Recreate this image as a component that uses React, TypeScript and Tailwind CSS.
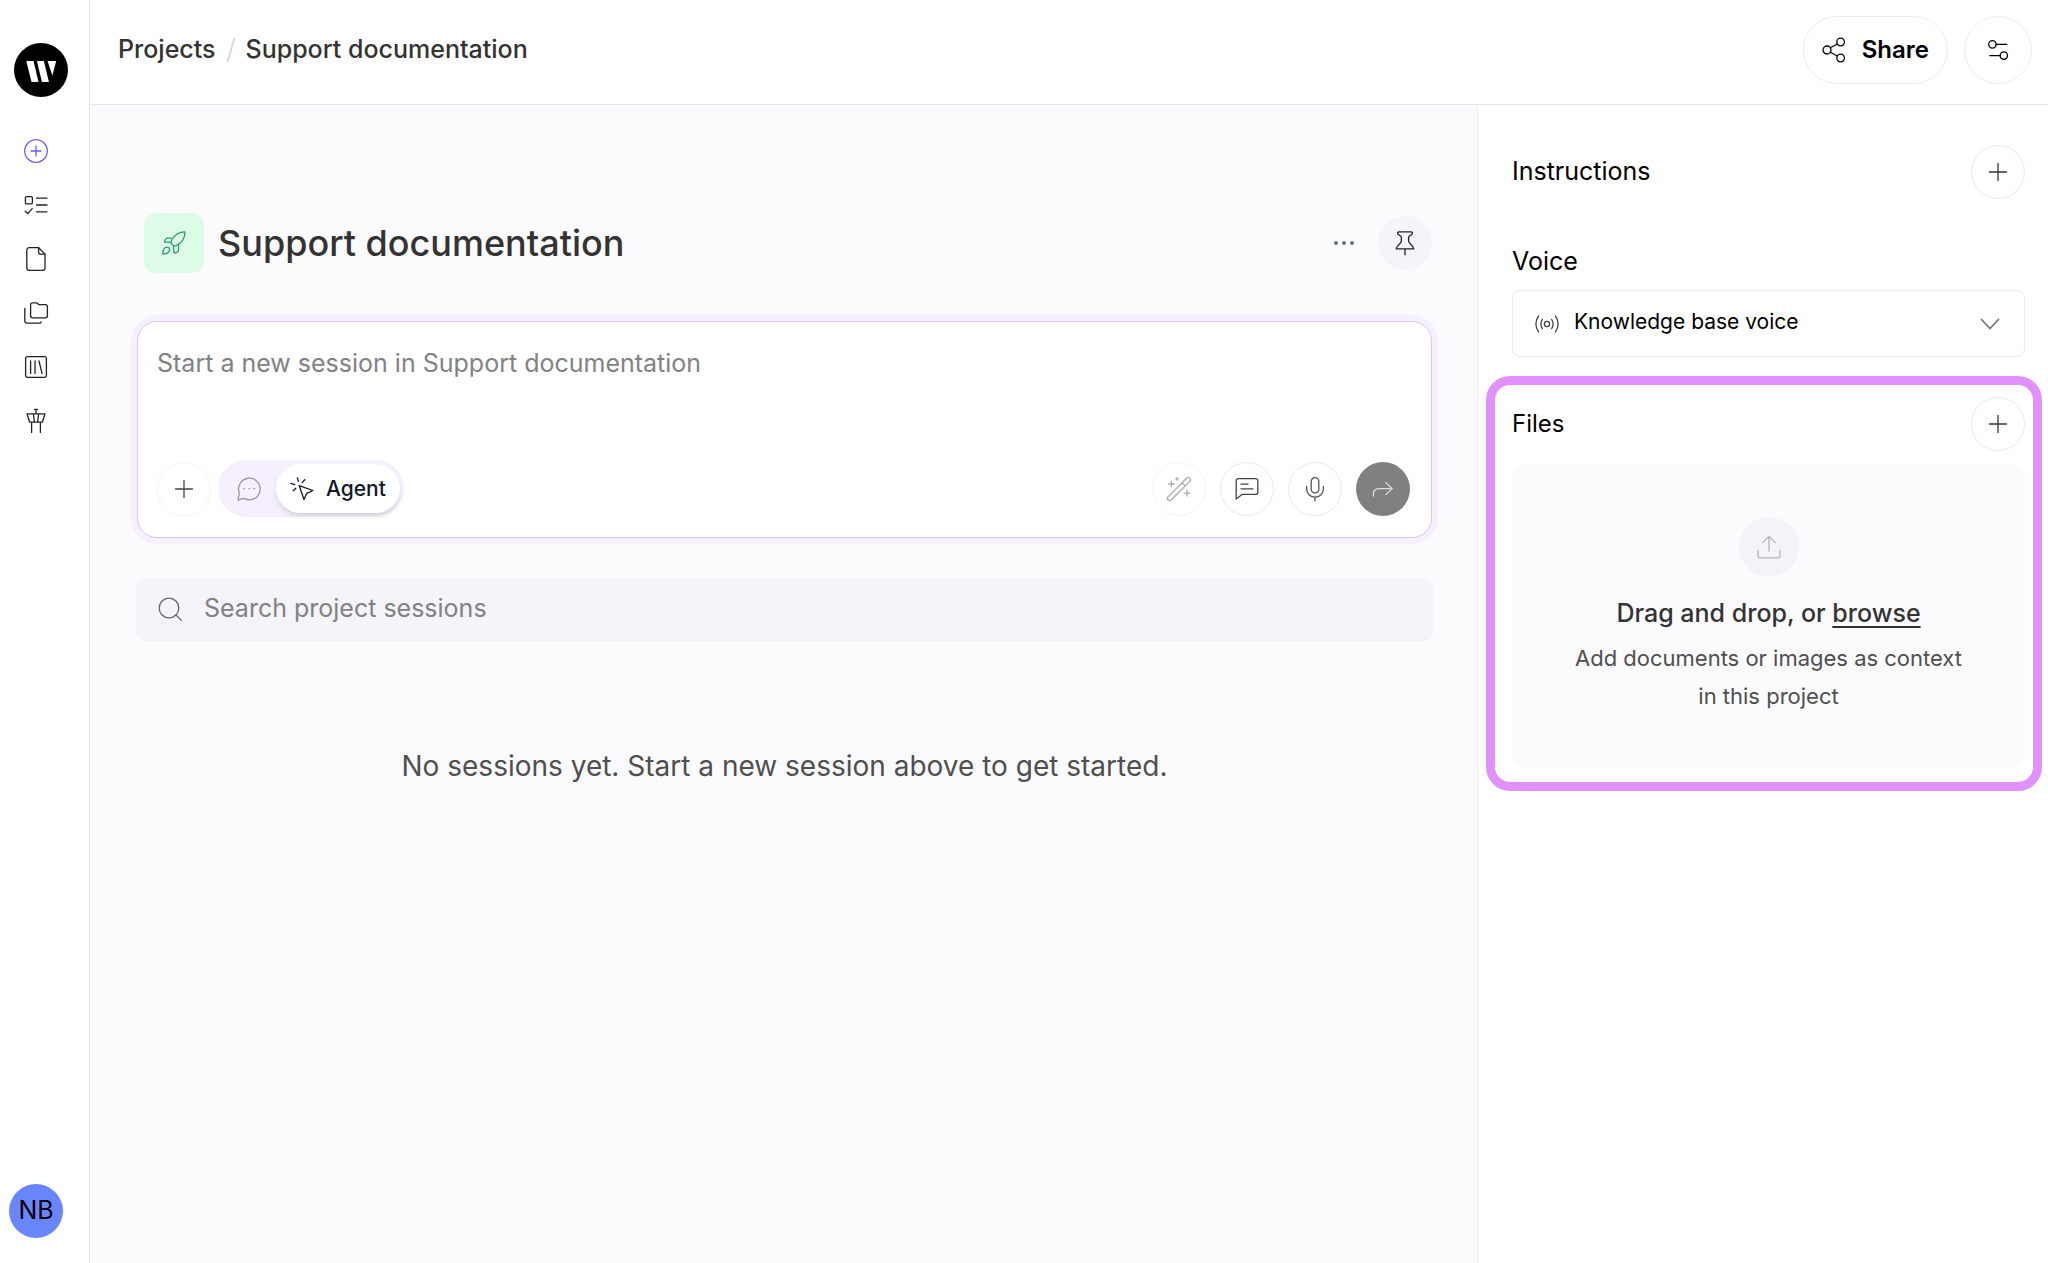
import React from "react";

const ICONS = {
  plusCircle: (
    <>
      <circle cx="12" cy="12" r="11.3" />
      <path d="M12 7v10M7 12h10" />
    </>
  ),
  tasks: (
    <>
      <rect x="1.4" y="3.6" width="7" height="7.2" rx="1.2" />
      <path d="M1.2 18.2l2.6 2.4 4.4-5M12.5 5.2H23M12.5 12H23M12.5 18.8H23" />
    </>
  ),
  file: (
    <>
      <path d="M5 .7h9.6l6.4 6.4v14a2.2 2.2 0 0 1-2.2 2.2H5a2.2 2.2 0 0 1-2.2-2.2V2.9A2.2 2.2 0 0 1 5 .7z" />
      <path d="M14.6.7v4.2a2.2 2.2 0 0 0 2.2 2.2H21" />
    </>
  ),
  folders: (
    <>
      <path d="M8.6 1.8h3.6c1.4 0 1.8 1.8 3.2 1.8h6a2 2 0 0 1 2 2v9.2a2 2 0 0 1-2 2H8.6a2 2 0 0 1-2-2v-11a2 2 0 0 1 2-2z" />
      <path d="M.8 7.5v12.3a2.4 2.4 0 0 0 2.4 2.4h12a2 2 0 0 0 2-1.2" />
    </>
  ),
  library: (
    <>
      <rect x="1.6" y="1.6" width="20.8" height="20.8" rx="1.8" />
      <path d="M6.6 6v12.4M11 6v12.4M15 6l3 12.4" />
    </>
  ),
  tower: (
    <path d="M3 4.8h18l-2.6 8.4H5.6L3 4.8zM12 4.8V.4M10.6.4h2.8M9.4 5l1 8M14.600 5l-1 8M7.600 13.200v10.200M16.400 13.200v10.200" />
  ),
  share: (
    <>
      <circle cx="5" cy="12" r="4" />
      <circle cx="18.6" cy="4" r="3.8" />
      <circle cx="18.6" cy="20" r="3.8" />
      <path d="M8.4 9.8l6.8-3.8M8.4 14.2l6.8 3.8" />
    </>
  ),
  settings: (
    <>
      <circle cx="6.4" cy="6.4" r="3.7" />
      <circle cx="17.8" cy="17.6" r="3.7" />
      <path d="M10.1 6.4h10.7M3.8 17.6h10.3" />
    </>
  ),
  rocket: (
    <>
      <path d="M9.2 10.2C12.4 3.4 17 .8 23 .9c.2 6-2.6 10.6-9.2 13.9l-2.2.1-2.4-2.5z" />
      <path d="M9.2 7.2H5.4C3.8 7.2 2.4 9.4 2.6 11.2h6.2M16.6 14.2v3.6c0 2.4-1.4 4.2-4.4 4.2-.8-2-.6-4.6-.6-7M.9 23.2c-.2-3 .6-7 4.2-7 2.6 0 3.2 3 1.6 4.8-1.5 1.6-3.7 2.1-5.8 2.200z" />
    </>
  ),
  pin: (
    <path d="M6 .9h12c1.6 0 1.8 1.4 1 2.3-1 1.2-3.4 1.4-3.4 3v3.6c0 3.2 4.8 4 5.2 8H3.2c.4-4 5.2-4.8 5.2-8V6.2c0-1.6-2.4-1.8-3.4-3C4.2 2.3 4.4.9 6 .9zM12 17.8v6" />
  ),
  plus: <path d="M12 3.5v17M3.5 12h17" />,
  chat: (
    <>
      <path d="M1 23l1.4-6.8A10.8 10.8 0 1 1 7 21.4L1 23z" />
      <path d="M7 11.7h.6M12 11.7h.6M17 11.7h.6" />
    </>
  ),
  cursor: (
    <path d="M9.2 8.6l13.6 4.9-6 2.8-2.8 6.2L9.2 8.6zM7.4.8l1 3.6M14.8 2.8l-2.6 2.8M1 6.4l3.8 1.2M3.2 13.8l2.6-2.6" />
  ),
  wand: (
    <path d="M1.2 19.6L19.6 1.2c2.4-2 5.2.8 3.2 3.2L4.4 22.8c-2.4 2-5.2-.8-3.2-3.2zM15 5.8L18.2 9M4.4 4.2v5.6M1.6 7h5.6M20 13.4V19M17.2 16.2h5.6M10 .4v2.8M8.6 1.8h2.8" />
  ),
  comment: (
    <>
      <path d="M3.2 1.6h17.6a2 2 0 0 1 2 2v11.8a2 2 0 0 1-2 2H7L1.2 22V3.6a2 2 0 0 1 2-2z" />
      <path d="M6 7.2h7M6 11.8h12" />
    </>
  ),
  mic: (
    <>
      <rect x="8.2" y=".7" width="7.6" height="15.2" rx="3.8" />
      <path d="M3.6 9.5v2.3a8.4 8.4 0 0 0 16.8 0V9.5M12 20.2v3.6" />
    </>
  ),
  send: <path d="M2.4 19v-2.4a5 5 0 0 1 5-5h13.8M14.8 5.6l6.4 6-6.4 6" />,
  search: (
    <>
      <circle cx="11" cy="11" r="9.8" />
      <path d="M18 18l5.4 5.4" />
    </>
  ),
  voice: (
    <>
      <circle cx="12" cy="12" r="2.6" />
      <path d="M7.4 7.4c-2 2.6-2 6.6 0 9.2M16.6 7.4c2 2.6 2 6.6 0 9.2M3.6 4c-3.6 4.6-3.6 11.4 0 16M20.4 4c3.6 4.6 3.6 11.4 0 16" />
    </>
  ),
  chevron: <path d="M3.5 7.500l8.500 9 8.500-9" strokeWidth="1.800" />,
  upload: <path d="M12 16V1.4M5.8 7.6L12 1.4l6.2 6.2M1 15.5v5.3a2 2 0 0 0 2 2h18a2 2 0 0 0 2-2v-5.3" />,
};

type IconName = keyof typeof ICONS;

function Icon({ name, className = "" }: { name: IconName; className?: string }) {
  return (
    <svg
      viewBox="0 0 24 24"
      fill="none"
      stroke="currentColor"
      strokeWidth="1.3"
      strokeLinecap="round"
      strokeLinejoin="round"
      overflow="visible"
      aria-hidden="true"
      className={`size-6 shrink-0 ${className}`}
    >
      {ICONS[name]}
    </svg>
  );
}

function RoundButton({ name, label, className = "" }: { name: IconName; label: string; className?: string }) {
  return (
    <button
      type="button"
      aria-label={label}
      className={`flex size-[54px] shrink-0 items-center justify-center rounded-full ${className}`}
    >
      <Icon name={name} />
    </button>
  );
}

const NAV: { name: IconName; label: string }[] = [
  { name: "plusCircle", label: "New session" },
  { name: "tasks", label: "Tasks" },
  { name: "file", label: "Documents" },
  { name: "folders", label: "Projects" },
  { name: "library", label: "Library" },
  { name: "tower", label: "Control tower" },
];

export default function App() {
  return (
    <div className="flex min-h-screen bg-white font-['Inter',sans-serif] text-[#333]">
      <Sidebar />
      <div className="flex min-w-0 flex-1 flex-col">
        <Header />
        <div className="flex flex-1">
          <main className="min-w-0 flex-1 bg-[#fbfbfe] pt-27 pr-11 pl-[46px]">
            <ProjectTitle />
            <Composer />
            <label className="mt-10 flex h-[62px] items-center gap-[22px] rounded-xl bg-[#f4f4f9] px-[22px] shadow-xs">
              <Icon name="search" className="text-[#666]" />
              <input
                type="search"
                aria-label="Search project sessions"
                placeholder="Search project sessions"
                className="min-w-0 flex-1 bg-transparent text-[25px] outline-none placeholder:text-[#828282]"
              />
            </label>
            <p className="mt-[106px] text-center text-[28px] leading-10 text-[#4f4f4f]">
              No sessions yet. Start a new session above to get started.
            </p>
          </main>
          <ContextPanel />
        </div>
      </div>
    </div>
  );
}

function Sidebar() {
  return (
    <aside className="flex w-[90px] shrink-0 flex-col border-r border-[#e4e4ed] pt-[43px] pb-[25px]">
      <a href="#home" aria-label="Home" className="ml-3.5">
        <svg viewBox="0 0 54 54" className="size-[54px]" aria-hidden="true">
          <circle cx="27" cy="27" r="27" fill="#000" />
          <path fill="#fff" d="M12.3 18h7.2l5 21h-7zM22.9 18h7l5 21h-7zM33.500 18h8.700L38.400 32.500z" />
        </svg>
      </a>
      <nav className="mt-[27px] flex flex-col">
        {NAV.map((item) => (
          <a
            key={item.label}
            href="#nav"
            aria-label={item.label}
            className={`ml-[9px] flex size-[54px] items-center justify-center ${
              item.name === "plusCircle" ? "text-[#6a5fff]" : "text-[#222]"
            }`}
          >
            <Icon name={item.name} />
          </a>
        ))}
      </nav>
      <button
        type="button"
        className="mt-auto ml-[9px] size-[54px] rounded-full bg-[#6985ff] text-[25px] text-black"
      >
        NB
      </button>
    </aside>
  );
}

function Header() {
  return (
    <header className="flex h-[105px] items-start justify-between border-b border-[#e4e4ed] pt-4 pr-4 pl-7">
      <nav className="flex h-[67px] items-center text-[25px] font-medium">
        <a href="#projects">Projects</a>
        <svg viewBox="0 0 10 26" className="mx-2.5 h-[26px] w-2.5" aria-hidden="true">
          <path d="M8.5 1L1.5 25" stroke="#d5d7dc" strokeWidth="2" />
        </svg>
        <a href="#project">Support documentation</a>
      </nav>
      <div className="flex gap-4 text-black">
        <button
          type="button"
          className="flex h-[68px] items-center gap-4 rounded-full border border-[#ececf2] px-[18px] text-2xl font-semibold"
        >
          <Icon name="share" />
          Share
        </button>
        <button
          type="button"
          aria-label="Settings"
          className="flex size-[68px] items-center justify-center rounded-full border border-[#ececf2]"
        >
          <Icon name="settings" />
        </button>
      </div>
    </header>
  );
}

function ProjectTitle() {
  return (
    <div className="flex items-center pr-px pl-2">
      <div className="flex size-15 items-center justify-center rounded-xl bg-[#dcfce7] text-[#2a9d6f]">
        <Icon name="rocket" />
      </div>
      <h1 className="ml-3.5 text-4xl font-medium">Support documentation</h1>
      <button type="button" aria-label="More" className="mr-6 ml-auto text-[#64748b]">
        <svg viewBox="0 0 20 20" className="size-5" fill="currentColor" aria-hidden="true">
          <circle cx="2" cy="10" r="2" />
          <circle cx="10" cy="10" r="2" />
          <circle cx="18" cy="10" r="2" />
        </svg>
      </button>
      <RoundButton name="pin" label="Pin project" className="bg-[#f4f4f9] text-[#222]" />
    </div>
  );
}

function Composer() {
  return (
    <form className="mx-px mt-12 rounded-[20px] border border-[#dcc4f8] bg-white pt-[23px] pr-[21px] pb-5 pl-[19px] ring-6 ring-[#f5effe]">
      <textarea
        aria-label="Message"
        placeholder="Start a new session in Support documentation"
        className="block h-[115px] w-full resize-none text-[25px] leading-9 outline-none placeholder:text-[#828282]"
      />
      <div className="flex items-center">
        <RoundButton name="plus" label="Add" className="border border-[#f4f4f9] text-[#444]" />
        <div className="ml-[7px] flex h-[57px] items-center rounded-full bg-[#f5effe] p-1">
          <button type="button" aria-label="Chat" className="px-[15px] text-[#999]">
            <Icon name="chat" />
          </button>
          <button
            type="button"
            className="flex h-[49px] items-center gap-3 rounded-full bg-white px-3.5 text-[21px] font-medium text-[#0f172a] shadow-md"
          >
            <Icon name="cursor" />
            Agent
          </button>
        </div>
        <div className="ml-auto flex gap-3.5">
          <RoundButton name="wand" label="Enhance prompt" className="border border-[#f4f4f9] text-[#aaa]" />
          <RoundButton name="comment" label="Prompts" className="border border-[#e9e7f3] text-[#444]" />
          <RoundButton name="mic" label="Dictate" className="border border-[#e9e7f3] text-[#555]" />
          <RoundButton name="send" label="Send" className="bg-[#808080] text-[#ddd]" />
        </div>
      </div>
    </form>
  );
}

function ContextPanel() {
  return (
    <aside className="w-[571px] shrink-0 border-l border-[#ececf4] pt-10 text-black">
      <div className="flex items-center justify-between pr-[23px] pl-[34px]">
        <h2 className="text-[25px]">Instructions</h2>
        <RoundButton name="plus" label="Add instructions" className="border border-[#e9e9f0] text-[#333]" />
      </div>

      <div className="mt-[46px] pr-[23px] pl-[34px]">
        <label htmlFor="voice" className="block text-[25px] leading-8">
          Voice
        </label>
        <div className="relative mt-[13px]">
          <select
            id="voice"
            className="h-[67px] w-full appearance-none rounded-lg border border-[#e9e9f0] bg-white pb-1 pl-[61px] text-[21px]"
          >
            <option>Knowledge base voice</option>
          </select>
          <div className="pointer-events-none absolute inset-0 flex items-center justify-between px-[23px]">
            <Icon name="voice" className="text-[#444]" />
            <Icon name="chevron" className="text-[#777]" />
          </div>
        </div>
      </div>

      <section className="mt-[19px] mr-1.5 ml-2 rounded-3xl border-9 border-[#e191ff] pt-3 pr-2 pb-[15px] pl-[17px]">
        <div className="flex items-center justify-between">
          <h2 className="text-2xl">Files</h2>
          <RoundButton name="plus" label="Add files" className="border border-[#e9e9f0] text-[#333]" />
        </div>
        <div className="mt-3.5 flex flex-col items-center rounded-xl bg-[#fbfbfe] px-12 pt-[52px] pb-[52px] text-center">
          <div className="flex size-15 items-center justify-center rounded-full bg-[#f3f4f8] text-[#b5b5b5]">
            <Icon name="upload" />
          </div>
          <p className="mt-[18px] text-[25px] leading-9 font-medium text-[#333]">
            Drag and drop, or{" "}
            <a href="#browse" className="underline underline-offset-4">
              browse
            </a>
          </p>
          <p className="mt-2 text-[22px] leading-[38px] text-[#4f4f4f]">
            Add documents or images as context
            <br />
            in this project
          </p>
        </div>
      </section>
    </aside>
  );
}
